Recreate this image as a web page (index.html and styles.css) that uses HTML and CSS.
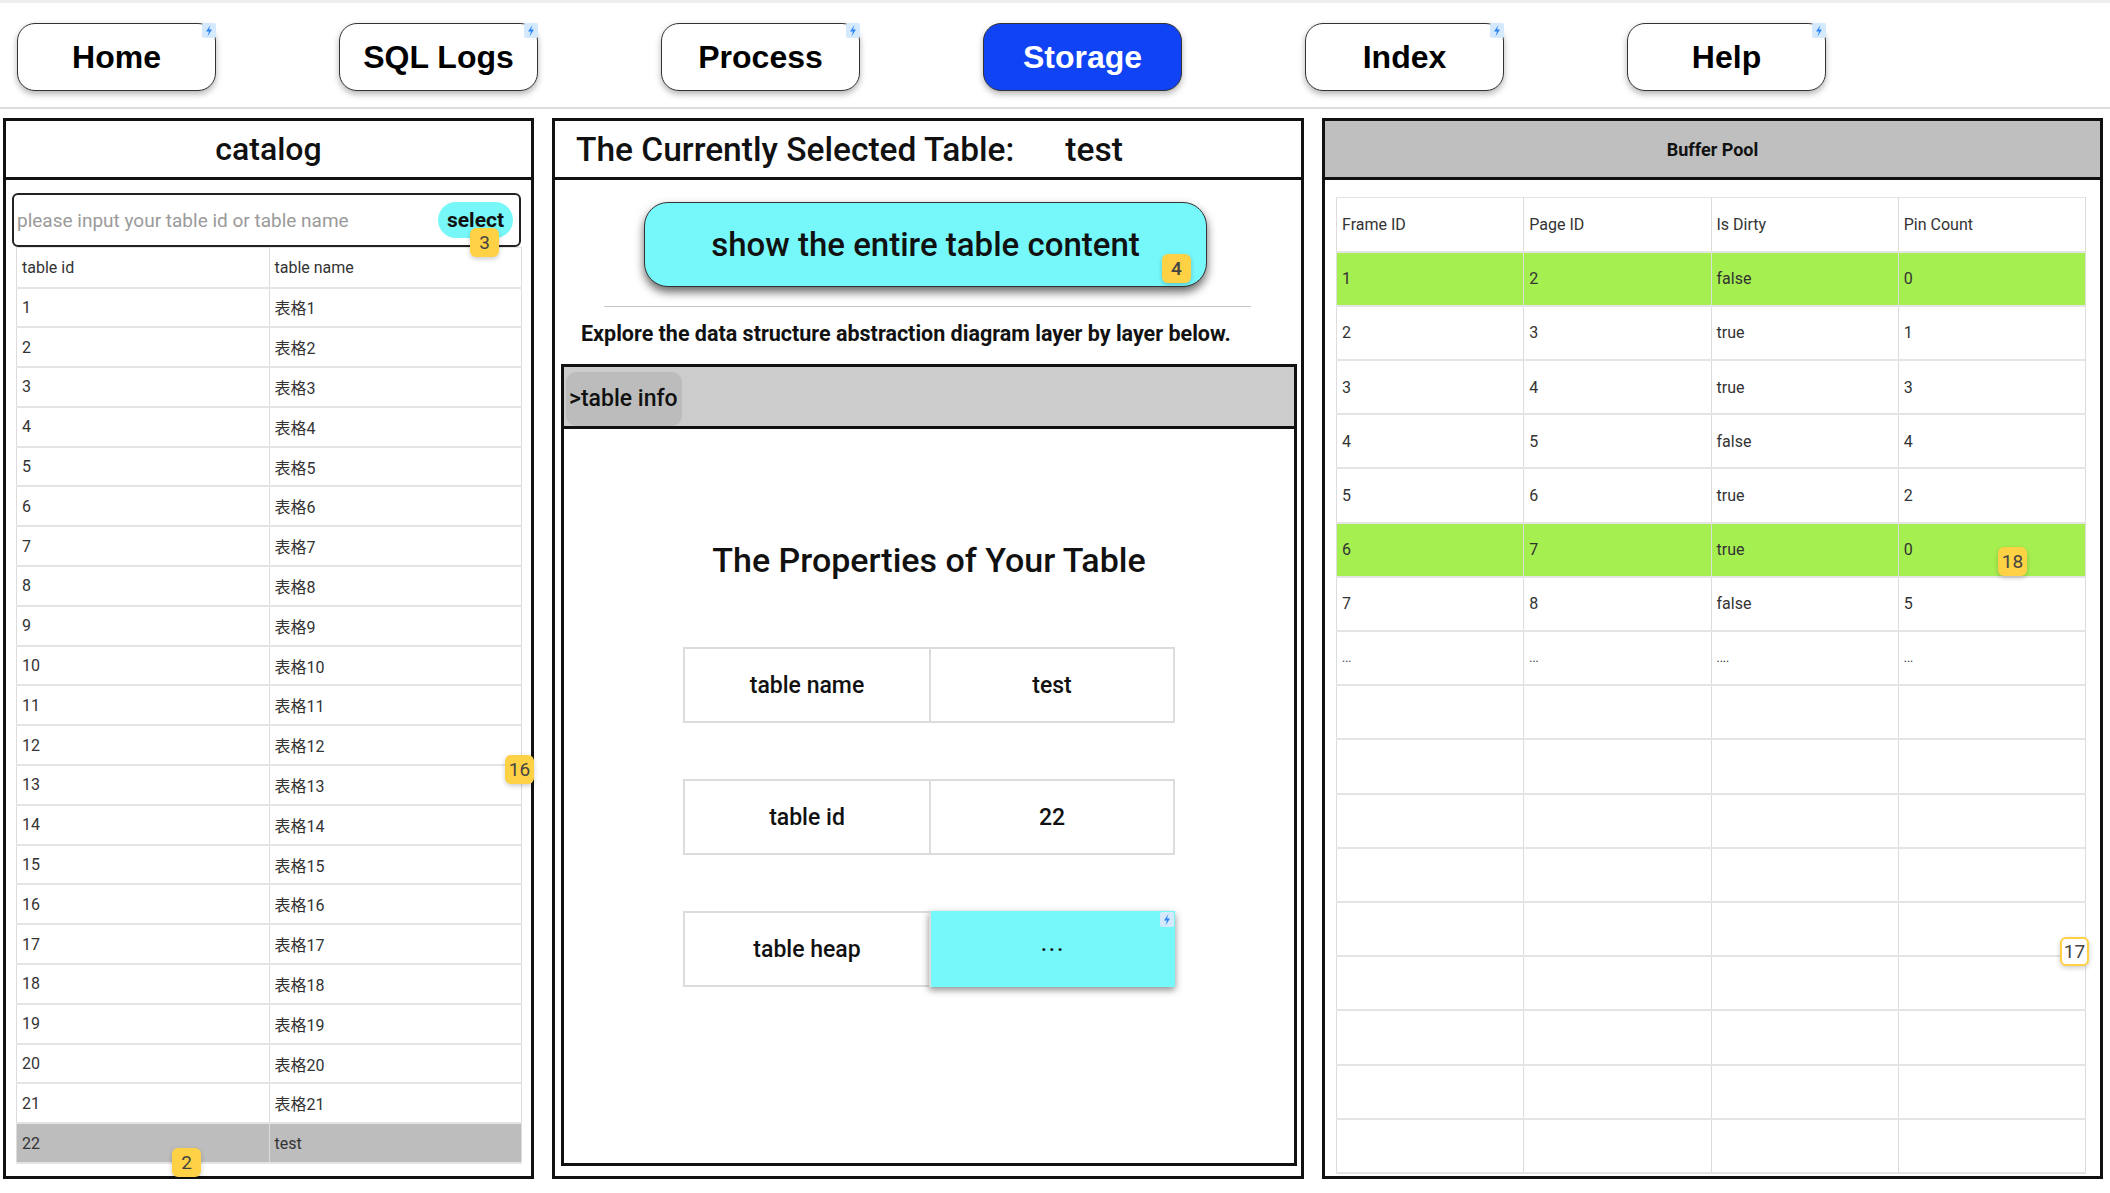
FILE: index.html
```html
<!DOCTYPE html>
<html lang="en">
<head>
    <meta charset="UTF-8">
    <meta name="viewport" content="width=device-width, initial-scale=1.0">
    <title>Storage</title>
    <link rel="stylesheet" href="styles.css">
</head>
<body>
    <nav class="topnav">
        <button class="nav-btn">Home<span class="bolt"><svg viewBox="0 0 14 15"><polygon points="8.5,2 4,8.5 7,8.5 5.5,13.5 10,6.5 7,6.5"/></svg></span></button>
        <button class="nav-btn">SQL Logs<span class="bolt"><svg viewBox="0 0 14 15"><polygon points="8.5,2 4,8.5 7,8.5 5.5,13.5 10,6.5 7,6.5"/></svg></span></button>
        <button class="nav-btn">Process<span class="bolt"><svg viewBox="0 0 14 15"><polygon points="8.5,2 4,8.5 7,8.5 5.5,13.5 10,6.5 7,6.5"/></svg></span></button>
        <button class="nav-btn active">Storage</button>
        <button class="nav-btn">Index<span class="bolt"><svg viewBox="0 0 14 15"><polygon points="8.5,2 4,8.5 7,8.5 5.5,13.5 10,6.5 7,6.5"/></svg></span></button>
        <button class="nav-btn">Help<span class="bolt"><svg viewBox="0 0 14 15"><polygon points="8.5,2 4,8.5 7,8.5 5.5,13.5 10,6.5 7,6.5"/></svg></span></button>
    </nav>

    <main class="workspace">
        <section class="panel catalog">
            <div class="panel-head">catalog</div>
            <div class="search">
                <input type="text" placeholder="please input your table id or table name">
                <button class="select-btn">select</button>
                <span class="mark mark-3">3</span>
            </div>
            <table class="catalog-table">
                <tr><td>table id</td><td>table name</td></tr>
                <tr><td>1</td><td>表格1</td></tr>
                <tr><td>2</td><td>表格2</td></tr>
                <tr><td>3</td><td>表格3</td></tr>
                <tr><td>4</td><td>表格4</td></tr>
                <tr><td>5</td><td>表格5</td></tr>
                <tr><td>6</td><td>表格6</td></tr>
                <tr><td>7</td><td>表格7</td></tr>
                <tr><td>8</td><td>表格8</td></tr>
                <tr><td>9</td><td>表格9</td></tr>
                <tr><td>10</td><td>表格10</td></tr>
                <tr><td>11</td><td>表格11</td></tr>
                <tr><td>12</td><td>表格12</td></tr>
                <tr><td>13</td><td>表格13</td></tr>
                <tr><td>14</td><td>表格14</td></tr>
                <tr><td>15</td><td>表格15</td></tr>
                <tr><td>16</td><td>表格16</td></tr>
                <tr><td>17</td><td>表格17</td></tr>
                <tr><td>18</td><td>表格18</td></tr>
                <tr><td>19</td><td>表格19</td></tr>
                <tr><td>20</td><td>表格20</td></tr>
                <tr><td>21</td><td>表格21</td></tr>
                <tr class="picked"><td>22</td><td>test</td></tr>
            </table>
            <span class="mark mark-16">16</span>
            <span class="mark mark-2">2</span>
        </section>

        <section class="panel detail">
            <div class="panel-head current">The Currently Selected Table:<span class="current-name">test</span></div>
            <button class="show-btn">show the entire table content<span class="mark mark-4">4</span></button>
            <hr class="rule">
            <p class="explore">Explore the data structure abstraction diagram layer by layer below.</p>
            <div class="layer">
                <div class="layer-head"><span class="chip">&gt;table info</span></div>
                <h2 class="props-title">The Properties of Your Table</h2>
                <div class="prop-row"><div class="prop-cell">table name</div><div class="prop-cell">test</div></div>
                <div class="prop-row"><div class="prop-cell">table id</div><div class="prop-cell">22</div></div>
                <div class="prop-row"><div class="prop-cell">table heap</div><div class="prop-cell heap">···<span class="bolt"><svg viewBox="0 0 14 15"><polygon points="8.5,2 4,8.5 7,8.5 5.5,13.5 10,6.5 7,6.5"/></svg></span></div></div>
            </div>
        </section>

        <section class="panel pool">
            <div class="panel-head pool-head">Buffer Pool</div>
            <table class="pool-table">
                <tr><td>Frame ID</td><td>Page ID</td><td>Is Dirty</td><td>Pin Count</td></tr>
                <tr class="hot"><td>1</td><td>2</td><td>false</td><td>0</td></tr>
                <tr><td>2</td><td>3</td><td>true</td><td>1</td></tr>
                <tr><td>3</td><td>4</td><td>true</td><td>3</td></tr>
                <tr><td>4</td><td>5</td><td>false</td><td>4</td></tr>
                <tr><td>5</td><td>6</td><td>true</td><td>2</td></tr>
                <tr class="hot"><td>6</td><td>7</td><td>true</td><td>0</td></tr>
                <tr><td>7</td><td>8</td><td>false</td><td>5</td></tr>
                <tr class="dots"><td>...</td><td>...</td><td>....</td><td>...</td></tr>
                <tr><td></td><td></td><td></td><td></td></tr>
                <tr><td></td><td></td><td></td><td></td></tr>
                <tr><td></td><td></td><td></td><td></td></tr>
                <tr><td></td><td></td><td></td><td></td></tr>
                <tr><td></td><td></td><td></td><td></td></tr>
                <tr><td></td><td></td><td></td><td></td></tr>
                <tr><td></td><td></td><td></td><td></td></tr>
                <tr><td></td><td></td><td></td><td></td></tr>
                <tr><td></td><td></td><td></td><td></td></tr>
            </table>
            <span class="mark mark-18">18</span>
            <span class="mark outline mark-17">17</span>
        </section>
    </main>
</body>
</html>
```

FILE: styles.css
```css
body {
    margin: 0;
    font-family: Roboto, "Noto Sans CJK SC", sans-serif;
    color: #111;
    background: #fff;
}

/* top navigation */
.topnav {
    display: flex;
    align-items: flex-start;
    gap: 123px;
    height: 109px;
    box-sizing: border-box;
    border-top: 3px solid #eee;
    border-bottom: 2px solid #ddd;
    padding: 20px 0 0 17px;
}
.nav-btn {
    position: relative;
    width: 199px;
    height: 68px;
    background: #fff;
    border: 1px solid #333;
    border-radius: 18px;
    box-shadow: 0 3px 6px rgba(0, 0, 0, 0.3);
    font-family: "Liberation Sans", Arial, sans-serif;
    font-weight: 700;
    font-size: 32px;
    color: #000;
    padding: 0;
    cursor: pointer;
}
.nav-btn.active {
    background: #1043f4;
    color: #fff;
}
.bolt {
    position: absolute;
    top: -1px;
    right: -1px;
    width: 14px;
    height: 15px;
    background: #d5e9fd;
    border-radius: 2px;
    display: flex;
}
.bolt svg {
    width: 14px;
    height: 15px;
    fill: #2b84f5;
}

/* three panels */
.workspace {
    display: flex;
    gap: 18px;
    padding-left: 3px;
    margin-top: 9px;
}
.panel {
    position: relative;
    height: 1061px;
    box-sizing: border-box;
    border: 3px solid #111;
    background: #fff;
}
.catalog { width: 531px; }
.detail { width: 752px; }
.pool { width: 781px; }

.panel-head {
    height: 56px;
    border-bottom: 3px solid #111;
    display: flex;
    align-items: center;
    justify-content: center;
    font-size: 32px;
    font-weight: 500;
}

/* catalog */
.search {
    position: relative;
    display: flex;
    align-items: center;
    height: 54px;
    box-sizing: border-box;
    margin: 13px 10px 0 6px;
    padding: 0 6px 0 3px;
    border: 2px solid #222;
    border-radius: 6px;
}
.search input {
    flex: 1;
    border: none;
    outline: none;
    font-family: Roboto, sans-serif;
    font-size: 19px;
    color: #333;
    padding: 0;
    background: transparent;
}
.search input::placeholder {
    color: #9a9a9a;
}
.select-btn {
    width: 75px;
    height: 36px;
    border: none;
    border-radius: 18px;
    background: #77f7f8;
    font-family: Roboto, sans-serif;
    font-weight: 700;
    font-size: 21px;
    color: #111;
    padding: 0;
}
.catalog-table,
.pool-table {
    border-collapse: collapse;
    table-layout: fixed;
    font-size: 16px;
    color: #333;
}
.catalog-table {
    width: 506px;
    margin: 0 9px 0 10px;
}
.catalog-table td,
.pool-table td {
    border-left: 1px solid #dcdcdc;
    border-right: 1px solid #dcdcdc;
    border-bottom: 2px solid #e4e4e4;
    padding: 0 5px;
    white-space: nowrap;
}
.catalog-table tr { height: 39.8px; }
.catalog-table tr:first-child { height: 40px; }
.catalog-table tr:first-child td { border-top: 1px solid #e4e4e4; }
.catalog-table tr.picked td { background: #bdbdbd; }

/* annotation marks */
.mark {
    position: absolute;
    width: 29px;
    height: 29px;
    border-radius: 6px;
    background: #ffd145;
    color: #444;
    font-family: Roboto, sans-serif;
    font-size: 19px;
    line-height: 29px;
    text-align: center;
    box-shadow: 0 2px 5px rgba(0, 0, 0, 0.2);
}
.mark.outline {
    background: #fff;
    border: 2px solid #ffd145;
    box-sizing: border-box;
    line-height: 25px;
}
.mark-3 { left: 456px; top: 33px; }
.mark-16 { left: 499px; top: 634px; }
.mark-2 { left: 166px; top: 1027px; }
.mark-4 { left: 517px; top: 51px; }
.mark-18 { left: 673px; top: 426px; }
.mark-17 { left: 735px; top: 816px; }

/* detail */
.panel-head.current {
    justify-content: flex-start;
    padding-left: 21px;
    font-size: 33.5px;
}
.current-name {
    margin-left: 51px;
}
.show-btn {
    position: relative;
    display: block;
    width: 563px;
    height: 85px;
    margin: 22px 0 0 89px;
    border: 1px solid #333;
    border-radius: 24px;
    background: #76f8fa;
    box-shadow: 0 5px 10px rgba(0, 0, 0, 0.6);
    font-family: Roboto, sans-serif;
    font-weight: 500;
    font-size: 33px;
    color: #111;
    padding: 0;
}
.rule {
    width: 647px;
    margin: 19px 0 0 49px;
    border: none;
    border-top: 1px solid #c8c8c8;
}
.explore {
    margin: 15px 0 0 26px;
    font-size: 21.5px;
    font-weight: 700;
    line-height: 24px;
}
.layer {
    height: 802px;
    box-sizing: border-box;
    margin: 18px 4px 0 6px;
    border: 3px solid #111;
}
.layer-head {
    height: 59px;
    box-sizing: content-box;
    background: #ccc;
    border-bottom: 3px solid #111;
    padding: 0 0 0 2px;
    display: flex;
    align-items: flex-end;
}
.chip {
    height: 54px;
    line-height: 54px;
    padding: 0 4px 0 3px;
    background: #bcbcbc;
    border-radius: 10px;
    font-size: 23px;
    font-weight: 500;
}
.props-title {
    margin: 111px 0 0;
    text-align: center;
    font-size: 34px;
    font-weight: 500;
    line-height: 40px;
}
.prop-row {
    display: grid;
    grid-template-columns: 1fr 1fr;
    width: 492px;
    height: 76px;
    box-sizing: border-box;
    margin: 56px auto 0;
    border: 2px solid #dcdcdc;
}
.props-title + .prop-row {
    margin-top: 67px;
}
.prop-cell {
    position: relative;
    display: flex;
    align-items: center;
    justify-content: center;
    font-size: 23px;
    font-weight: 500;
}
.prop-cell + .prop-cell {
    border-left: 2px solid #dcdcdc;
}
.prop-cell.heap {
    background: #76f8fa;
    margin: -2px -2px -2px 0;
    box-shadow: 0 3px 7px rgba(0, 0, 0, 0.45);
    font-size: 22px;
    letter-spacing: 2px;
}
.prop-cell.heap .bolt {
    top: 1px;
    right: 1px;
    letter-spacing: 0;
}

/* buffer pool */
.pool-head {
    background: #bfbfbf;
    font-size: 18px;
    font-weight: 700;
}
.pool-table {
    width: 750px;
    margin: 17px 13px 0 11px;
}
.pool-table tr { height: 54.2px; }
.pool-table tr:first-child td { border-top: 1px solid #e4e4e4; }
.pool-table tr.hot td { background: #a6ef51; }
.pool-table tr.dots td {
    font-size: 12px;
    vertical-align: middle;
}
```
